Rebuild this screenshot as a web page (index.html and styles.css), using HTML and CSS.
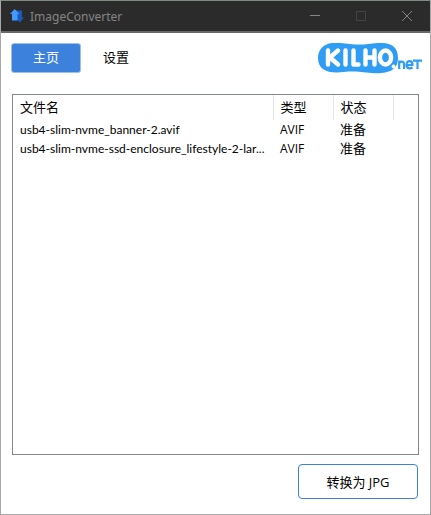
FILE: index.html
```html
<!DOCTYPE html>
<html lang="zh-CN">
<head>
  <meta charset="UTF-8" />
  <meta name="viewport" content="width=device-width, initial-scale=1.0"/>
  <title>ImageConverter</title>
  <link rel="stylesheet" href="styles.css">
</head>
<body>

  <div class="window">
    <header class="titlebar">
      <svg class="app-icon" viewBox="0 0 14 14" aria-hidden="true">
        <path fill="#1a59bd" d="M6 1.500h6v7h2L9.800 13.500 5.500 9z"/>
        <path fill="#4399ff" d="M4.700 0L9.500 5H7.500v6.500H2V5H0z"/>
      </svg>
      <h1>ImageConverter</h1>
      <div class="window-buttons">
        <button type="button" aria-label="最小化">
          <svg viewBox="0 0 12 12"><path d="M1 5.500h10"/></svg>
        </button>
        <button type="button" aria-label="最大化" disabled>
          <svg viewBox="0 0 12 12"><path d="M1.500 1.500h9v9h-9z"/></svg>
        </button>
        <button type="button" aria-label="关闭">
          <svg viewBox="0 0 12 12"><path d="M1 1l10 10M11 1L1 11"/></svg>
        </button>
      </div>
    </header>

    <div class="toolbar">
      <nav class="tabs">
        <button type="button" class="tab active">主页</button>
        <button type="button" class="tab">设置</button>
      </nav>
      <a href="#" class="logo" aria-label="KILHO.net">
        <svg viewBox="0 0 104 32">
          <path fill="#2f9df4" d="M14 0C26-1 36 3 50 1c14-2 30-3 30 14 0 14-13 16-26 15-12-1-18-2-28-1C10 31 0 27 0 15 0 7 5 1 14 0z"/>
          <g fill="none" stroke="#fff" stroke-width="4.400" stroke-linecap="round" stroke-linejoin="round">
            <path d="M10 7.500v14M20 7.500l-8 7 8 7M27.500 7.500v14M35.500 7.500v14h5M47.500 7.500v14M56.500 7.500v14M47.500 14.500h9"/>
            <ellipse cx="67.500" cy="14.500" rx="5.600" ry="7"/>
          </g>
          <circle cx="75.500" cy="23.500" r="1.900" fill="#fff"/>
          <g fill="none" stroke="#2f9df4" stroke-width="2.200">
            <path d="M81.200 26v-8.500M81.200 21c0-3 4.800-3.500 4.800 0v5M89 22h5.500c0-5-6-5-6-.3 0 4 4 4.300 6 2.600M95 17.600h9M99.500 17v9"/>
          </g>
        </svg>
      </a>
    </div>

    <main class="file-list">
      <table>
        <colgroup>
          <col>
          <col class="col-small">
          <col class="col-small">
          <col class="col-rest">
        </colgroup>
        <thead>
          <tr><th>文件名</th><th>类型</th><th>状态</th><td></td></tr>
        </thead>
        <tbody>
          <tr><td class="name">usb4-slim-nvme_banner-2.avif</td><td class="type">AVIF</td><td>准备</td><td></td></tr>
          <tr><td class="name">usb4-slim-nvme-ssd-enclosure_lifestyle-2-lar...</td><td class="type">AVIF</td><td>准备</td><td></td></tr>
        </tbody>
      </table>
    </main>

    <footer class="actions">
      <button type="button" class="convert-btn">转换为 JPG</button>
    </footer>
  </div>

</body>
</html>
```
FILE: styles.css
```css
:root {
  --title-bg: #2b2b2b;
  --title-text: #858585;
  --accent: #3c82dc;
  --frame: #828790;
}

* {
  box-sizing: border-box;
}

body {
  margin: 0;
  font-family: "Open Sans", "Noto Sans CJK SC", sans-serif;
  font-size: 13px;
  color: #000;
}

button {
  font: inherit;
  color: inherit;
  padding: 0;
}

.window {
  min-height: 100vh;
  display: flex;
  flex-direction: column;
  background: #fff;
  border: 1px solid #a8a8a8;
  border-top-color: #7f8a80;
}

.titlebar {
  display: flex;
  align-items: center;
  height: 32px;
  padding-left: 9px;
  background: var(--title-bg);
  border-bottom: 2px solid #696969;
  color: var(--title-text);
}

.app-icon {
  width: 14px;
  height: 14px;
}

h1 {
  flex: 1;
  margin: 0 0 0 6px;
  font-family: "Noto Sans", sans-serif;
  font-size: 12px;
  font-weight: 400;
}

.window-buttons {
  display: flex;
}

.window-buttons button {
  display: flex;
  align-items: center;
  justify-content: center;
  width: 46px;
  height: 30px;
  border: none;
  background: none;
}

.window-buttons button:disabled {
  color: #444;
}

.window-buttons svg {
  width: 12px;
  height: 12px;
  fill: none;
  stroke: currentColor;
}

.toolbar {
  display: flex;
  justify-content: space-between;
  padding: 10px 8px 0 10px;
}

.tabs {
  display: flex;
}

.tab {
  width: 70px;
  height: 30px;
  border: 1px solid transparent;
  border-radius: 3px;
  background: none;
  line-height: 24px;
  padding-bottom: 2px;
}

.tab.active {
  background: var(--accent);
  border-color: #9dc0ee;
  color: #fff;
}

.logo svg {
  display: block;
  width: 104px;
  height: 32px;
}

.file-list {
  flex: 1;
  margin: 19px 11px 9px;
  border: 1px solid var(--frame);
}

table {
  width: 100%;
  table-layout: fixed;
  border-collapse: collapse;
}

.col-small {
  width: 60px;
}

.col-rest {
  width: 25px;
}

th,
td {
  height: 19px;
  padding: 0 0 0 7px;
  font-weight: 400;
  line-height: 19px;
  text-align: left;
  white-space: nowrap;
  overflow: hidden;
  text-overflow: ellipsis;
}

th {
  height: 25px;
  border-right: 1px solid #e5e5e5;
}

.name {
  font-family: Lato, sans-serif;
  font-size: 12px;
}

.type {
  font-size: 12px;
}

.actions {
  display: flex;
  justify-content: flex-end;
  padding: 0 12px 15px;
}

.convert-btn {
  width: 120px;
  height: 35px;
  background: #fff;
  border: 1px solid var(--accent);
  border-radius: 4px;
}
```
